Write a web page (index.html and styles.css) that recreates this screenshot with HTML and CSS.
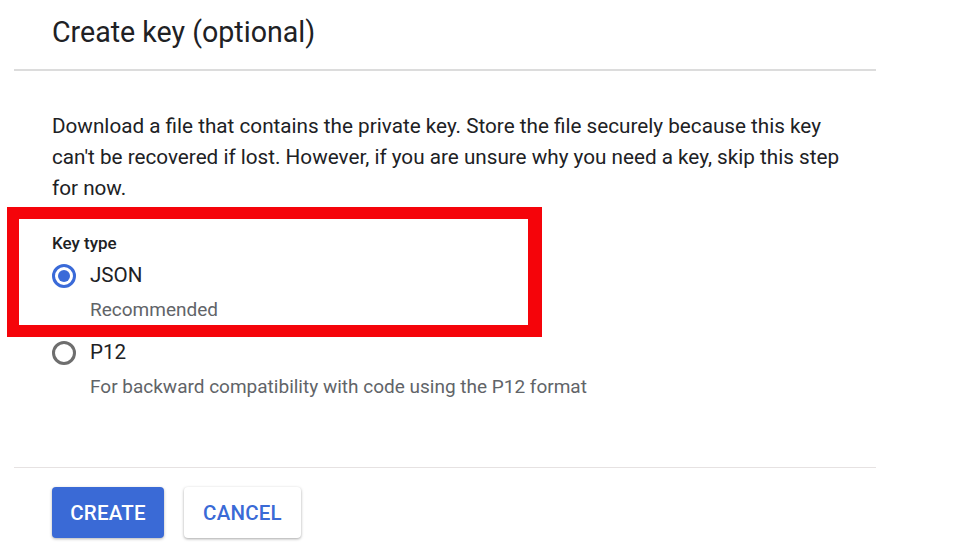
FILE: index.html
```html
<!DOCTYPE html>
<html>
<head>
<meta charset="utf-8">
<link rel="stylesheet" href="styles.css">
</head>
<body>
<div class="panel">
  <header class="head">
    <h1 class="title">Create key (optional)</h1>
  </header>
  <section class="body">
    <p class="desc">Download a file that contains the private key. Store the file securely because this key can't be recovered if lost. However, if you are unsure why you need a key, skip this step for now.</p>
    <div class="group">
      <div class="group-label">Key type</div>
      <label class="option">
        <span class="radio checked"></span>
        <span class="opt-text">
          <span class="opt-name">JSON</span>
          <span class="opt-hint">Recommended</span>
        </span>
      </label>
      <label class="option">
        <span class="radio"></span>
        <span class="opt-text">
          <span class="opt-name">P12</span>
          <span class="opt-hint">For backward compatibility with code using the P12 format</span>
        </span>
      </label>
      <div class="highlight"></div>
    </div>
  </section>
  <footer class="actions">
    <button class="btn primary">CREATE</button>
    <button class="btn secondary">CANCEL</button>
  </footer>
</div>
</body>
</html>
```
FILE: styles.css
```css
html, body {
  margin: 0;
  padding: 0;
  background: #ffffff;
}
body {
  font-family: Roboto, "Liberation Sans", sans-serif;
  color: #202124;
  width: 974px;
  height: 543px;
  overflow: hidden;
}
.panel {
  margin-left: 14px;
  width: 862px;
  position: relative;
}
.head {
  height: 71px;
  border-bottom: 2px solid #dcdcdc;
  padding-left: 38px;
  box-sizing: border-box;
  display: flex;
  align-items: flex-start;
}
.title {
  margin: 14px 0 0 0;
  font-size: 28.6px;
  font-weight: 400;
  line-height: 36px;
  color: #202124;
}
.body {
  padding: 40px 0 0 38px;
  height: 397px;
  box-sizing: border-box;
  border-bottom: 1px solid #e6e2e2;
}
.desc {
  margin: 0;
  font-size: 20.7px;
  line-height: 31px;
  width: 800px;
  color: #202124;
}
.group {
  position: relative;
  margin-top: 29px;
}
.group-label {
  font-size: 17px;
  font-weight: 500;
  line-height: 20px;
  color: #202124;
}
.option {
  display: flex;
  align-items: flex-start;
  gap: 14px;
  margin-top: 9px;
}
.option + .option {
  margin-top: 17px;
}
.radio {
  width: 18px;
  height: 18px;
  border: 3px solid #6e6e6e;
  border-radius: 50%;
  box-sizing: content-box;
  flex: none;
  position: relative;
  margin-top: 2px;
}
.radio.checked {
  border-color: #3a6ad8;
}
.radio.checked::after {
  content: "";
  position: absolute;
  left: 3px;
  top: 3px;
  width: 12px;
  height: 12px;
  border-radius: 50%;
  background: #3a6ad8;
}
.opt-text {
  display: flex;
  flex-direction: column;
}
.opt-name {
  font-size: 20.6px;
  line-height: 26px;
  color: #202124;
}
.opt-hint {
  font-size: 19px;
  line-height: 24px;
  margin-top: 10px;
  color: #616468;
}
.highlight {
  position: absolute;
  left: -45px;
  top: -26px;
  width: 535px;
  height: 130px;
  box-sizing: border-box;
  border: 12px solid #f5040a;
  border-right-width: 14px;
  pointer-events: none;
}
.actions {
  padding: 19px 0 0 38px;
  display: flex;
  gap: 20px;
}
.btn {
  font-family: Roboto, "Liberation Sans", sans-serif;
  font-size: 20.5px;
  font-weight: 500;
  height: 51px;
  border-radius: 4px;
  border: none;
  padding: 0;
  letter-spacing: 0.2px;
}
.primary {
  background: #3a6ad6;
  color: #ffffff;
  box-shadow: 0 1px 3px rgba(0,0,0,0.3);
  width: 112px;
}
.secondary {
  background: #ffffff;
  color: #3a6ad6;
  box-shadow: 0 1px 3px rgba(0,0,0,0.35);
  width: 117px;
}
```
